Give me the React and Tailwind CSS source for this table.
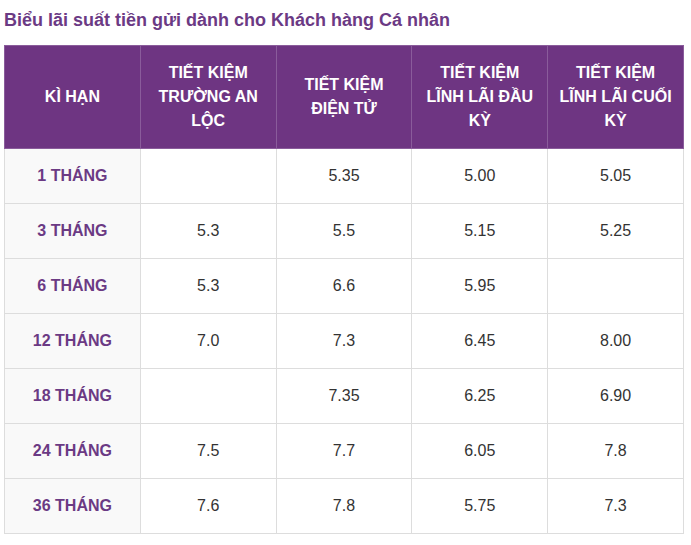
const HEADERS = ['KÌ HẠN', 'TIẾT KIỆM TRƯỜNG AN LỘC', 'TIẾT KIỆM ĐIỆN TỬ', 'TIẾT KIỆM LĨNH LÃI ĐẦU KỲ', 'TIẾT KIỆM LĨNH LÃI CUỐI KỲ'];

const ROWS = [
  ['1 THÁNG', '', '5.35', '5.00', '5.05'],
  ['3 THÁNG', '5.3', '5.5', '5.15', '5.25'],
  ['6 THÁNG', '5.3', '6.6', '5.95', ''],
  ['12 THÁNG', '7.0', '7.3', '6.45', '8.00'],
  ['18 THÁNG', '', '7.35', '6.25', '6.90'],
  ['24 THÁNG', '7.5', '7.7', '6.05', '7.8'],
  ['36 THÁNG', '7.6', '7.8', '5.75', '7.3'],
];

export default function App() {
  return (
    <div className="min-h-screen bg-white px-[4px] pt-[8px]" style={{ fontFamily: '"Liberation Sans", Arial, sans-serif' }}>
      <h2 className="text-[18px] font-bold leading-[24px] text-[#6b3a84] mb-[13px]">
        Biểu lãi suất tiền gửi dành cho Khách hàng Cá nhân
      </h2>
      <table className="w-[680px] border-collapse table-fixed">
        <thead>
          <tr className="bg-[#6e3582]">
            {HEADERS.map((h) => (
              <th
                key={h}
                className="h-[103px] border border-[#8a5c9b] px-[8px] text-center align-middle text-[16px] font-bold leading-[24px] text-white"
              >
                {h}
              </th>
            ))}
          </tr>
        </thead>
        <tbody>
          {ROWS.map((row) => (
            <tr key={row[0]}>
              {row.map((c, i) => (
                <td
                  key={i}
                  className={`h-[55px] border border-[#dddddd] text-center align-middle text-[16px] ${
                    i === 0 ? 'bg-[#f9f9f9] font-bold text-[#6b3a84]' : 'text-[#333333]'
                  }`}
                >
                  {c}
                </td>
              ))}
            </tr>
          ))}
        </tbody>
      </table>
    </div>
  );
}
